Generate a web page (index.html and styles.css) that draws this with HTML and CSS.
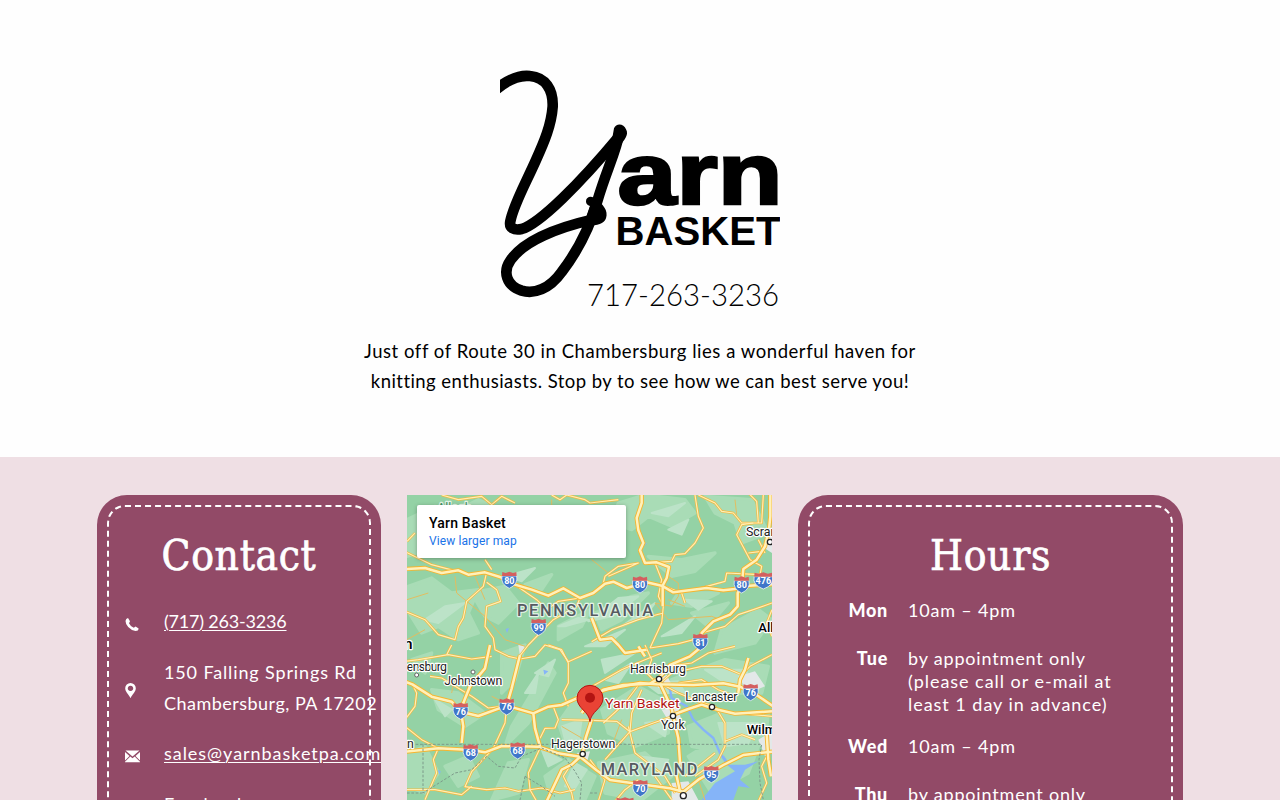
FILE: index.html
```html
<!DOCTYPE html>
<html lang="en">
<head>
<meta charset="utf-8">
<title>Yarn Basket</title>
<link rel="stylesheet" href="styles.css">
</head>
<body>
<header class="intro">
  <svg class="logo" viewBox="500 60 280 260" role="img" aria-label="Yarn Basket">
    <g class="logo-y" transform="translate(490 60) scale(.33333)">
      <path d="M5 100C55 54 95 45 120 48C166 52 190 88 188 140C184 195 163 245 138 300C108 368 70 435 61 484C57 504 72 512 95 507C150 490 270 370 385 232"/>
      <path d="M388 220C378 275 350 330 323 420C300 500 258 580 215 636C178 688 132 703 95 692C49 677 37 635 62 600C102 542 205 502 310 478"/>
      <path class="blob" d="M372 205C378 188 402 190 408 208C418 225 402 240 393 254L365 245ZM288 424C288 408 308 406 318 418C338 432 356 452 348 475C342 492 322 497 295 497L285 480L300 438C292 436 288 432 288 424Z"/>
    </g>
    <text class="logo-arn" x="617.500" y="203.500" textLength="165" lengthAdjust="spacingAndGlyphs">arn</text>
    <text class="logo-basket" x="615.500" y="244.800" textLength="165" lengthAdjust="spacingAndGlyphs">BASKET</text>
    <text class="logo-phone" x="587" y="305.500" textLength="192" lengthAdjust="spacingAndGlyphs">717-263-3236</text>
  </svg>
  <p class="lead"><span class="l1">Just off of Route 30 in Chambersburg lies a wonderful haven for</span><br><span class="l2">knitting enthusiasts. Stop by to see how we can best serve you!</span></p>
</header>
<main class="panels">
  <section class="card">
    <div class="stitch">
      <h2 class="title">Contact</h2>
      <ul class="contacts">
        <li><svg class="icon" viewBox="0 0 15 15"><path d="M3 1L5 4.200 4 6.200Q5.500 9.500 8.800 10.700L10.600 9.600 13.600 11.500Q13.500 14 10.500 14Q6.500 13.500 3.200 10Q.5 7 .5 4Q.8 1.700 3 1Z"/></svg><a class="tel">(717) 263-3236</a></li>
        <li><svg class="icon" viewBox="0 0 15 15"><path fill-rule="evenodd" d="M5.500 0a5.300 5.300 0 0 1 5.300 5.300C10.800 9 7.500 11 5.500 15.200C3.500 11 .2 9 .2 5.300A5.300 5.300 0 0 1 5.500 0ZM5.500 2.700a2.700 2.700 0 1 0 .01 0Z"/></svg><span><span class="a1">150 Falling Springs Rd</span><br><span class="a2">Chambersburg, PA 17202</span></span></li>
        <li><svg class="icon" viewBox="0 0 15 15"><path d="M.5 1.500H14.500L7.500 7.500ZM0 3L4.500 7 0 11.500ZM15 3L10.500 7 15 11.500ZM5.300 7.600L7.500 9.300 9.700 7.600 15 12.800V13.200H0V12.800Z"/></svg><a class="mail">sales@yarnbasketpa.com</a></li>
        <li><svg class="icon fb" viewBox="0 0 15 15"><path d="M1 0H13V13H1Z"/></svg><a class="mail">Facebook</a></li>
      </ul>
    </div>
  </section>

  <section class="map">
    <svg class="map-art" viewBox="6 6 1095 915">
      <defs>
        <g id="major">
          <path d="M0 228L60 225 110 240 160 232 190 245 240 238 285 252 330 275 380 290 430 308 475 286 525 315 565 300 600 272 625 266 665 285 725 268 770 278 805 298 905 285 955 292 990 288 1010 280 1101 274"/>
          <path d="M710 0V30L695 75 700 112 715 150 705 172 720 210 755 208 792 222 785 255 773 278V340"/>
          <path d="M1096 0V70L1092 110 1080 160 1055 200 1015 228 1010 280 998 300V340L975 365 925 385 890 420 885 465 855 490 795 516 762 556 735 572 655 576 595 590 555 625 530 660"/>
          <path d="M0 566L22 574 80 611 140 626 167 656 220 669 305 638 385 661 430 641 470 636 515 616 610 588 705 570 755 574 865 576 955 571 1005 581 1055 606 1105 640"/>
          <path d="M0 776L100 766 197 771 240 778 290 759 400 761 460 781 525 791 575 832 615 861 685 871 795 886 835 896 880 860 955 816 1015 786 1101 776"/>
          <path d="M765 571L800 646 805 671 820 736 825 806 815 850 825 896"/>
          <path d="M560 680L542 735 532 785 500 815 470 830 425 925"/>
          <path d="M255 456L240 526 195 580 167 650 175 700 170 750"/>
          <path d="M345 486L320 586 305 638"/><path d="M385 661L390 706 405 760"/>
          <path d="M560 375L585 440 620 436 640 456 660 480 725 470"/>
          <path d="M1000 600L1005 560 1020 530 1030 495M1085 720L1090 800 1098 850"/>
          <path d="M805 665L850 648 890 635 930 648 990 662 1101 655M700 460L720 490"/>
        </g>
        <g id="minor">
          <path d="M0 176L80 215 145 232M245 238L235 280 185 325 175 375 160 400 150 440 100 425 60 380 0 355"/>
          <path d="M245 268L275 290 287 325 245 340 240 400 265 435 270 470 310 490 345 498 390 490 420 456 465 470 490 506 560 475"/>
          <path d="M330 275L395 320 425 350 460 325 525 315 515 340 445 380 405 420 370 456 345 488"/>
          <path d="M110 6L160 20 230 10 260 35 290 10 330 30M240 200L260 230M440 6L465 20 485 6 540 20 555 30 640 20M6 145L30 120"/>
          <path d="M870 6L880 70 895 105 870 150 840 182 810 185 800 205 755 208M880 6L930 30 950 55 985 60 1010 90 1070 90 1075 6"/>
          <path d="M1030 0L1055 25 1060 90M1045 90L1010 95 995 125 1035 200 1070 220 1065 245 965 240 960 265 870 290 805 298M1030 180L1070 175M1060 140L1080 180M610 250L700 210 640 220 600 250 595 270"/>
          <path d="M750 210L770 260 760 310 775 340 770 390 735 465M773 278L830 300 840 330M1101 330L1045 350 1000 365 960 400 890 420M560 446L620 410 700 380 775 360M735 465L820 452 885 435M1101 350L1085 390 1101 430"/>
          <path d="M0 505L40 500 130 485 200 498 260 490M22 574L35 600 30 640 0 680M75 550L110 555 200 610 250 645 305 638M305 638L300 690 265 766 200 836 180 881 245 890 300 885 340 895 410 885 465 900 510 890"/>
          <path d="M0 700L50 740 100 766 85 800 95 840 60 920M0 890L90 890 170 905 200 880M140 456L125 485M430 456L470 470 490 510V570L475 600 490 640"/>
          <path d="M445 641L460 680 450 705 420 706 405 736M470 680L560 682 635 685 675 716 745 690 800 671M595 690L660 630 705 570M710 590L680 660 675 715M675 716L640 755 600 800"/>
          <path d="M405 766L370 840 375 890 395 925M500 811L475 850 500 900 505 925M670 700L690 780 780 850 810 900M560 581L650 530 720 500 770 480M720 456L740 500 725 540 755 570M765 571L800 540 890 520 950 520 1010 545 1035 520 1101 485M790 520L860 510 910 480 990 460"/>
          <path d="M765 571L820 600 880 625 930 640 960 690 960 760 940 800 870 850M820 570L890 560 940 590 990 610M990 660L1101 670M960 745L1010 725 1050 740M930 780L880 820 840 850M555 800L600 860 580 925M630 925L660 890 700 860M750 850L800 920M1090 780L1070 820 1085 870 1060 925"/>
        </g>
        <g id="shield"><path class="blue" d="M-22 -12H22Q27 13 0 25Q-27 13-22 -12Z"/><path class="red" d="M-21 -24L-11-21 0-25 11-21 21-24 22-12H-22Z"/></g>
      </defs>
      <path class="land" d="M0 0H1110V930H0Z"/>
      <g class="patch">
        <path d="M6 80L90 40 140 60 220 20 290 50 230 90 120 130 60 170 6 190ZM10 280L80 255 140 300 220 290 190 360 220 420 160 440 100 400 50 420 6 350ZM200 300L300 280 340 330 280 390 240 370ZM360 275L440 245 410 290ZM640 30L720 6 840 20 870 60 800 100 730 70 680 110 620 90ZM900 10L1040 20 1090 120 1010 150 990 90 930 60ZM730 190L830 200 930 180 870 235 800 250ZM820 300L940 300 860 340 800 330ZM570 360L680 310 730 300 650 380 590 410ZM860 360L970 330 910 400ZM950 410L1060 350 1100 380 1050 450 930 480ZM460 400L555 350 530 400 460 440ZM290 480L360 456 330 560 290 600ZM20 500L80 480 60 540ZM80 590L160 600 240 660 180 700 100 650ZM320 700L380 600 430 510 450 540 370 690 300 760ZM460 690L530 590 570 620 540 740 480 750ZM590 650L700 580 790 630 790 720 690 760 610 720ZM800 560L960 500 1090 520 1070 600 950 600 880 630ZM850 700L950 660 1090 660 1080 750 960 780 860 760ZM580 810L720 780 800 850 710 921 600 900ZM6 780L60 760 100 840 60 900 6 880ZM120 820L190 790 220 850 160 880ZM310 810L370 800 340 900 260 921ZM420 850L490 800 570 850 540 920 440 920ZM850 790L960 720 1060 760 1030 840 920 900Z"/>
      </g>
      <g class="streak">
        <path d="M60 380L120 340 180 330 100 390ZM300 250L390 225 350 265ZM550 385L640 315 700 310 620 370ZM650 400L750 330 720 370ZM740 60L840 30 790 70ZM790 110L850 80 830 125ZM840 320L920 325 880 350ZM770 430L870 370 830 420ZM540 460L660 410 600 460ZM590 500L690 480 600 540ZM460 400L520 375 550 380 480 400ZM390 540L450 500 430 550ZM360 600L400 540 390 600ZM470 700L530 680 520 750 480 740ZM90 620L140 650 120 670ZM720 570L820 565 840 600 760 600ZM720 690L790 680 780 730ZM900 530L1020 530 1060 590 960 570ZM940 690L1060 690 1030 750 960 760ZM510 810L545 830 510 885 480 880ZM600 560L680 510 640 570ZM410 770L470 800 430 820ZM700 790L790 800 770 840Z"/>
      </g>
      <g class="urban"><path d="M1000 550L1050 535 1080 580 1030 600ZM770 650L820 640 830 690 800 700ZM750 565L785 545 800 575 760 585ZM800 870L850 865 880 921H800ZM1060 740L1101 715V780L1080 790ZM340 456L360 460 345 490ZM1070 160L1101 120V180ZM515 780L555 775 545 810Z"/></g>
      <g class="water">
        <path class="river" d="M760 558L795 590 800 615 845 640 865 680 895 710 925 735 945 780 965 810"/>
        <path class="stream" d="M775 340L768 400 740 450M715 160L725 150"/>
        <path d="M955 785L965 815 990 835 930 870 890 921H985L1000 880 1035 885 1005 860 1020 830 1060 805 1020 815 975 815ZM302 408L312 405 306 420ZM415 530L430 535 418 545ZM98 830L107 835 104 845Z"/>
      </g>
      <g class="tiny-roads"><path d="M150 250L155 300 240 370 300 440 360 460M6 320L70 300M6 440L60 410M210 250L240 320M560 200L610 240M440 20L440 60M790 250L820 270 820 310 800 340 750 330 790 380 920 370 960 385M990 20L995 65M840 340L790 320M260 610L300 630M620 760L650 680M470 700L530 735M880 860L900 921M150 550L140 600"/></g>
      <use href="#minor" class="minor-case"/><use href="#minor" class="minor-fill"/>
      <use href="#major" class="major-case"/><use href="#major" class="major-fill"/>
      <path class="border" d="M6 754H1070L1062 800 1065 870 1075 921M54 754V900L150 840 200 830 245 790 280 820 330 825 350 790 410 765 480 795 510 835 530 870 525 921M360 850L345 921M360 850L410 880 450 910M6 900H60M555 900H580"/>
      <g class="shields">
        <use href="#shield" x="313" y="261"/><use href="#shield" x="401" y="402"/><use href="#shield" x="705" y="275"/><use href="#shield" x="1010" y="275"/>
        <use href="#shield" transform="translate(1075 263) scale(1.250 1)"/><use href="#shield" x="886" y="447"/><use href="#shield" x="167" y="654"/><use href="#shield" x="305" y="641"/><use href="#shield" x="197" y="779"/><use href="#shield" x="338" y="773"/><use href="#shield" x="1037" y="598"/><use href="#shield" x="919" y="844"/><use href="#shield" x="706" y="886"/><use href="#shield" transform="translate(660 938) scale(1.200 1)"/>
      </g>
      <g class="route">
        <text x="313" y="272">80</text><text x="401" y="413">99</text><text x="705" y="286">80</text><text x="1010" y="286">80</text><text x="1075" y="274">476</text><text x="886" y="459">81</text><text x="167" y="665">76</text><text x="305" y="652">76</text><text x="197" y="790">68</text><text x="338" y="784">68</text><text x="1037" y="609">76</text><text x="919" y="856">95</text><text x="706" y="897">70</text>
      </g>
      <g class="towns">
        <circle cx="1095" cy="147" r="8"/><circle class="small" cx="35" cy="546" r="6"/><circle class="small" cx="204" cy="537" r="6"/><circle cx="762" cy="558" r="8"/><circle cx="921" cy="642" r="8"/><circle cx="804" cy="669" r="8"/><circle cx="533" cy="783" r="8"/><circle cx="835" cy="908" r="9"/>
      </g>
      <g class="names">
        <text x="1023" y="130">Scranton</text>
        <text x="-12" y="533" textLength="138">eensburg</text>
        <text x="118" y="576" textLength="174">Johnstown</text>
        <text x="675" y="540" textLength="168">Harrisburg</text>
        <text x="841" y="623" textLength="156">Lancaster</text>
        <text x="768" y="708" textLength="71">York</text>
        <text x="438" y="764" textLength="193">Hagerstown</text>
        <text x="6" y="764">n</text>
        <text class="city" x="1060" y="418">Allentown</text>
        <text class="city" x="1025" y="724">Wilmington</text>
        <text class="city big" x="-3" y="467">n</text>
        <text class="forest" x="97" y="57">Allegh</text>
        <text class="state" x="336" y="369" textLength="408">PENNSYLVANIA</text>
        <text class="state" x="587" y="846" textLength="290">MARYLAND</text>
        <text class="place" x="600" y="644" textLength="224" lengthAdjust="spacingAndGlyphs">Yarn Basket</text>
      </g>
      <path class="pin" d="M555 686C552 655 517 647 516 616A39 39 0 0 1 594 616C593 647 558 655 555 686Z"/>
      <circle class="pin-dot" cx="555" cy="614" r="15"/>
    </svg>
    <div class="place-box"><strong>Yarn Basket</strong><a>View larger map</a></div>
  </section>

  <section class="card">
    <div class="stitch">
      <h2 class="title hours-title">Hours</h2>
      <dl class="hours">
        <dt>Mon</dt><dd>10am – 4pm</dd>
        <dt>Tue</dt><dd>by appointment only<br><span class="wide">(please call or e-mail at<br>least 1 day in advance)</span></dd>
        <dt>Wed</dt><dd>10am – 4pm</dd>
        <dt>Thu</dt><dd>by appointment only<br><span class="wide">(please call or e-mail at<br>least 1 day in advance)</span></dd>
      </dl>
    </div>
  </section>
</main>
</body>
</html>
```
FILE: styles.css
```css
* { box-sizing: border-box; }
body { margin: 0; height: 800px; overflow: hidden; background: #efdfe4; font: 18px/31px Lato, "Liberation Sans", sans-serif; color: #000; }
.intro { height: 457px; background: #fefefe; padding-top: 60px; display: flex; flex-direction: column; align-items: center; }
.logo { width: 280px; height: 260px; flex: none; }
.logo-y path { fill: none; stroke: #000; stroke-width: 32; }
.logo-y .blob { fill: #000; stroke: none; }
.logo-arn { font: bold 88px "Liberation Sans", sans-serif; stroke: #000; stroke-width: 2.6px; }
.logo-basket { font: bold 40.5px "Liberation Sans", sans-serif; }
.logo-phone { font: 300 32px Lato, sans-serif; }
.lead { margin: 16px 0 0; text-align: center; line-height: 30px; white-space: nowrap; font-size: 18.5px; }
.l1 { letter-spacing: .54px; }
.l2 { letter-spacing: .44px; }
.panels { display: grid; grid-template-columns: 284px 365px 385px; gap: 26px; padding: 38px 97px 0; height: 700px; }
.card { background: #924a67; color: #fff; border-radius: 30px; padding: 10px; min-width: 0; }
.stitch { border: 2px dashed #fff; border-radius: 18px; height: 100%; }
.title { margin: 24px 0 0; font: 500 42px/50px "DejaVu Serif Condensed", "DejaVu Serif", serif; text-align: center; letter-spacing: .7px; -webkit-text-stroke: .7px #fff; }
.contacts { list-style: none; margin: 25px 0 0; padding: 0 0 0 16px; }
.contacts li { display: grid; grid-template-columns: 15px auto; column-gap: 24px; align-items: center; justify-content: start; margin-bottom: 19.5px; white-space: nowrap; }
.contacts a { text-decoration: underline; text-decoration-thickness: 1px; text-underline-offset: 2px; }
.tel { letter-spacing: -.2px; }
.a1 { letter-spacing: .87px; }
.a2 { letter-spacing: .48px; }
.mail { letter-spacing: .96px; }
.icon { width: 15px; height: 15px; fill: #fff; position: relative; top: 3px; }
.hours { display: grid; grid-template-columns: 78px 1fr; column-gap: 20px; row-gap: 19px; margin: 18px 0 0; }
.hours dt { font-weight: 900; text-align: right; line-height: 23px; min-height: 29px; letter-spacing: .7px; }
.hours dd { margin: 0; line-height: 23px; white-space: nowrap; letter-spacing: .82px; }
.wide { letter-spacing: .97px; }
.map { position: relative; height: 305px; overflow: hidden; }
.map-art { display: block; width: 365px; height: 305px; }
.place-box { position: absolute; left: 10px; top: 10px; width: 209px; height: 53px; padding: 9px 12px; background: #fff; border-radius: 2px; box-shadow: 0 1px 4px rgba(0,0,0,.3); font: 12px/18px Roboto, sans-serif; display: flex; flex-direction: column; }
.place-box strong { font-size: 14px; font-weight: 500; letter-spacing: .2px; }
.place-box a { color: #1a73e8; letter-spacing: .1px; }
.land { fill: #94d2a5; }
.patch { fill: #a9dcb6; stroke: #a9dcb6; stroke-width: 10; stroke-linejoin: round; }
.streak { fill: #bce3c8; stroke: #bce3c8; stroke-width: 6; stroke-linejoin: round; }
.urban { fill: #e3e8e8; }
.water { fill: #85b4f8; }
.river, .stream { fill: none; stroke: #85b4f8; stroke-width: 7; stroke-linejoin: round; }
.stream { stroke-width: 3; }
.minor-case, .minor-fill, .major-case, .major-fill, .tiny-roads { fill: none; stroke-linejoin: round; }
.tiny-roads { stroke: #e2bd60; stroke-width: 3; }
.minor-case { stroke: #f3b93f; stroke-width: 7.5; }
.minor-fill { stroke: #ffefb5; stroke-width: 3.5; }
.major-case { stroke: #f6b52f; stroke-width: 13; }
.major-fill { stroke: #fff1ba; stroke-width: 7.5; }
.border { fill: none; stroke: #7d9a8a; stroke-width: 3; stroke-dasharray: 8 5; }
.blue { fill: #3f76c9; stroke: #fff; stroke-width: 2; }
.red { fill: #d45f5f; }
.route { fill: #fff; font: bold 27px Roboto, sans-serif; text-anchor: middle; }
.towns circle { fill: #fff; stroke: #222; stroke-width: 4; }
.towns .small { stroke: #666; stroke-width: 3; }
.names { font: 37px Roboto, sans-serif; fill: #222; stroke: #fff; stroke-width: 7; stroke-linejoin: round; paint-order: stroke; }
.names .city { font-size: 39px; font-weight: 500; fill: #000; }
.names .big { font-size: 46px; }
.names .forest { fill: #3d9261; stroke: #e4f4e8; }
.names .state { font-size: 49px; font-weight: 500; fill: #565b61; stroke: #e4f4e8; }
.names .place { font-size: 41px; fill: #b31412; }
.pin { fill: #ea4335; stroke: #b31412; stroke-width: 3; }
.pin-dot { fill: #b31412; }
```
